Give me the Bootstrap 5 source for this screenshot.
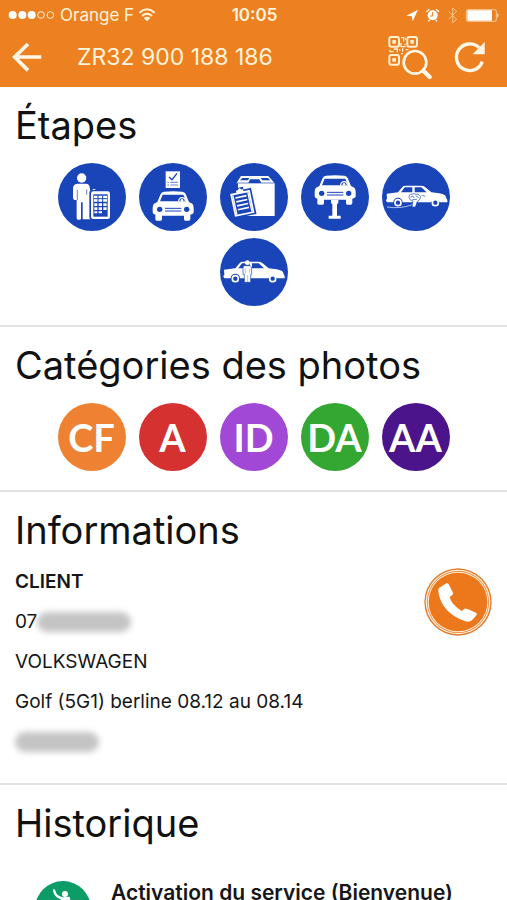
<!DOCTYPE html>
<html lang="fr">
<head>
<meta charset="utf-8">
<meta name="viewport" content="width=device-width, initial-scale=1">
<title>ZR32 900 188 186</title>
<link href="https://cdn.jsdelivr.net/npm/bootstrap@5.3.0/dist/css/bootstrap.min.css" rel="stylesheet">
<style>
  body { font-family: Inter, "Liberation Sans", sans-serif; font-size: 19px; line-height: 24px; color: #161616; background: #fff; }
  svg { display: block; }
  .app-header { background: #ed8121; color: #fff3da; }
  .status-bar { height: 30px; font-size: 17px; padding: 0 6px 0 8px; }
  .status-side { flex: 1 1 0; }
  .clock { font-weight: 600; }
  .title-bar { height: 57px; padding: 0 20px 4px 12px; }
  .title-bar .app-title { font-size: 23px; line-height: 28px; font-weight: 400; margin-left: 35px; }
  .title-bar .btn { color: #fff7e6; line-height: 0; }
  .scan-btn { margin-right: 20px; }
  .panel { padding: 13px 15px 19px; border-bottom: 2px solid #e2e2e2; }
  .panel h2 { font-size: 38px; line-height: 50px; font-weight: 400; margin: 0 0 13px; color: #111; }
  .bubbles { column-gap: 13px; row-gap: 7px; }
  .bubble { width: 68px; height: 68px; border-radius: 50%; border: 0; padding: 0; color: #fff; flex: none; overflow: hidden; }
  .step { background: #1945b8; }
  .cat { font-family: Lato, "Liberation Sans", sans-serif; font-weight: 700; font-size: 38px; line-height: 68px; text-align: center; }
  .cat-cf { background: #ee8232; }
  .cat-a { background: #d63131; }
  .cat-id { background: #a149d6; }
  .cat-da { background: #33a732; }
  .cat-aa { background: #4b148a; }
  .details { padding-bottom: 29px; }
  .details .client-lines { padding-top: 2px; }
  .details p { margin-bottom: 16px; }
  .hidden-value { height: 20px; border-radius: 10px; background: #c4c4c4; filter: blur(3px); }
  .hidden-phone { width: 94px; }
  .hidden-plate { width: 84px; }
  .event-icon { width: 56px; height: 56px; }
  .event { padding: 20px 20px 0; gap: 20px; }
  .event-title { font-size: 21px; font-weight: 600; }
</style>
<script src="https://cdn.jsdelivr.net/npm/bootstrap@5.3.0/dist/js/bootstrap.bundle.min.js"></script>
</head>
<body>
<svg width="0" height="0" class="position-absolute" aria-hidden="true">
  <defs>
    <g id="car-front">
      <path d="M332 119Q335 113 342 112Q369 109 397 112Q404 113 407 119L417 143L427 148Q431 152 431 161V174Q431 179 421 181V194Q421 199 416 199H406Q402 199 402 194V184H336V194Q336 199 332 199H320Q316 199 316 194V181Q308 179 308 174V161Q308 152 312 148L322 143Z" fill="#fff"/>
      <path d="M338 121H400L408 141H330Z" fill="#1945b8"/>
      <path d="M386 141a10 11 0 0 1 20 0" fill="none" stroke="#fff" stroke-width="4"/>
      <circle cx="396" cy="138" r="4" fill="#fff"/>
      <circle cx="329" cy="165" r="8" fill="#1945b8"/><circle cx="410" cy="165" r="8" fill="#1945b8"/>
      <path d="M345 162H394M345 170H394" stroke="#1945b8" stroke-width="3"/>
    </g>
    <g id="car-side">
      <path d="M34 117L68 113L82 96Q85 93 90 93H137Q144 93 149 97L168 113Q195 115 208 121Q212 124 213 131L216 136V143H193A14 14 0 0 0 167 143H82A14 14 0 0 0 54 143H36Q32 140 32 136L35 132Z" fill="#fff"/>
      <path d="M77 113L88 98H111V113ZM118 98H138L154 113H118Z" fill="#1945b8"/>
      <circle cx="68" cy="144" r="9" fill="none" stroke="#fff" stroke-width="5"/>
      <circle cx="180" cy="144" r="9" fill="none" stroke="#fff" stroke-width="5"/>
    </g>
  </defs>
</svg>

<div class="d-flex flex-column vh-100 overflow-hidden">
  <header class="app-header flex-shrink-0">
    <div class="status-bar d-flex align-items-center">
      <div class="status-side d-flex align-items-center gap-1">
        <svg width="48" height="14" viewBox="27 23 144 42" aria-hidden="true">
          <g fill="#fff"><circle cx="41" cy="44" r="12"/><circle cx="70" cy="44" r="12"/><circle cx="98" cy="44" r="12"/></g>
          <g fill="none" stroke="#fff0d0" stroke-width="3"><circle cx="126" cy="44" r="10"/><circle cx="154" cy="44" r="10"/></g>
        </svg>
        <span>Orange F</span>
        <svg width="18" height="14" viewBox="410 22 54 42" aria-hidden="true">
          <g fill="none" stroke="#fff3da" stroke-width="6"><path d="M414 36Q437 16 460 36M422 46Q437 33 452 46"/></g>
          <path d="M427 52Q437 44 447 52L437 62Z" fill="#fff3da"/>
        </svg>
      </div>
      <div class="clock">10:05</div>
      <div class="status-side d-flex justify-content-end">
        <svg width="96" height="18" viewBox="466 16 288 54" aria-label="Localisation, alarme, Bluetooth, batterie" role="img">
          <path d="M470 45L505 27L489 62L486 46Z" fill="#fff"/>
          <circle cx="549" cy="44" r="15" fill="#fff"/><path d="M530 33L539 26M568 33L559 26M540 57L536 62M558 57L562 62" stroke="#fff" stroke-width="4"/>
          <path d="M549 34V46H541" fill="none" stroke="#ed8121" stroke-width="3"/>
          <path d="M597 33L621 56L609 66V22L621 32L597 55" fill="none" stroke="#f8c68b" stroke-width="3"/>
          <rect x="650" y="27" width="90" height="35" rx="5" fill="none" stroke="#fff3da" stroke-width="2"/>
          <rect x="653" y="29" width="74" height="31" rx="2" fill="#fff"/><path d="M743 38Q750 44 743 51Z" fill="#fff3da"/>
        </svg>
      </div>
    </div>
    <div class="title-bar d-flex align-items-center">
      <button type="button" class="btn border-0 p-0" aria-label="Retour">
        <svg width="30" height="30" viewBox="34 127 90 90"><path d="M122 172H43M82 133L42 172L82 212" fill="none" stroke="currentColor" stroke-width="11"/></svg>
      </button>
      <h1 class="app-title mb-0 flex-grow-1">ZR32 900 188 186</h1>
      <button type="button" class="btn border-0 p-0 scan-btn" aria-label="Rechercher un code QR">
        <svg width="46" height="46" viewBox="414 101 138 138">
          <g fill="none" stroke="#fff0cf" stroke-width="6">
            <rect x="421" y="110" width="29" height="29" rx="6"/><rect x="475" y="110" width="29" height="29" rx="6"/><rect x="421" y="164" width="29" height="29" rx="6"/>
            <path d="M456 112H464V124M470 112V119M456 128V139H470M468 130V135M423 148V154H434M434 146H445V156M452 146V152M461 144V154M470 148H478M456 160H462" stroke-width="4"/>
          </g>
          <g fill="#fff0cf"><rect x="430" y="119" width="11" height="11" rx="2"/><rect x="484" y="119" width="11" height="11" rx="2"/><rect x="430" y="173" width="11" height="11" rx="2"/></g>
          <circle cx="498" cy="186" r="41" fill="#ed8121"/>
          <circle cx="498" cy="186" r="34" fill="none" stroke="#fff7e6" stroke-width="8"/>
          <path d="M523 211L542 230" stroke="#fff7e6" stroke-width="13" stroke-linecap="round"/>
        </svg>
      </button>
      <button type="button" class="btn border-0 p-0" aria-label="Actualiser">
        <svg width="34" height="34" viewBox="612 121 102 102"><path d="M700 186A40 40 0 1 1 690 144" fill="none" stroke="currentColor" stroke-width="10"/><path d="M707 127V164H671Z" fill="currentColor"/></svg>
      </button>
    </div>
  </header>

  <main class="flex-grow-1 overflow-hidden">
    <section class="panel">
      <h2>Étapes</h2>
      <div class="bubbles d-flex flex-wrap justify-content-center px-4">
        <button type="button" class="bubble step" aria-label="Réception du client">
          <svg viewBox="24 25 204 204">
            <g fill="#fff"><circle cx="95" cy="70" r="14"/>
            <path d="M82 87H108Q118 87 119 98L121 110L132 102L138 106L127 116V194H98V143H93V192Q93 195 88 195H84Q80 195 80 191V136H73Q69 134 69 128V101Q70 88 82 87Z"/></g>
            <path d="M82 105V136M110 104V120" stroke="#1945b8" stroke-width="2"/>
            <rect x="118" y="106" width="66" height="90" rx="9" fill="#1945b8"/>
            <rect x="123" y="110" width="57" height="83" rx="7" fill="#fff"/>
            <rect x="130" y="119" width="43" height="67" fill="#1945b8"/>
            <path d="M132 123H171V141H132ZM133 146H142V154H133ZM146 146H156V154H146ZM160 146H170V154H160ZM133 158H142V166H133ZM146 158H156V166H146ZM160 158H170V166H160ZM133 170H142V176H133ZM146 170H156V176H146Z" fill="#fff"/>
            <path d="M132 132H171M144 122V142M158 122V142" stroke="#1945b8" stroke-width="3"/>
          </svg>
        </button>
        <button type="button" class="bubble step" aria-label="Contrôle du véhicule">
          <svg viewBox="267 26 204 204"><use href="#car-front"/>
            <rect x="347" y="51" width="43" height="50" fill="#fff"/>
            <path d="M357 68L366 76L381 57" fill="none" stroke="#1945b8" stroke-width="4"/>
            <path d="M352 84H357M361 84H384M352 92H357M361 92H384" stroke="#1945b8" stroke-width="2"/>
          </svg>
        </button>
        <button type="button" class="bubble step" aria-label="Commande des pièces">
          <svg viewBox="24 26 204 204">
            <path d="M87 65H169L188 87V185H78V87H73Z" fill="#fff"/>
            <path d="M84 78L91 71H112L108 78ZM146 71H168L175 78H151ZM114 75H142L148 86H109Z" fill="#1945b8"/>
            <path d="M73 86H188" stroke="#1945b8" stroke-width="2"/>
            <g transform="translate(91 147) rotate(-12)">
              <path d="M-35-40H-12V-48H12V-40H35V40H-35Z" fill="#1945b8"/>
              <path d="M-30-35H-11V-41H-5Q0-52 5-41H11V-35H30V35H-30Z" fill="#fff"/>
              <path d="M-25-29H25V30H-25Z" fill="#1945b8"/>
              <path d="M-25-29H-21V30H-25ZM21-29H25V30H21Z" fill="#fff"/>
              <path d="M-17-20H17M-17-8H17M-17 4H17M-17 16H17" stroke="#fff" stroke-width="5"/>
            </g>
          </svg>
        </button>
        <button type="button" class="bubble step" aria-label="Véhicule sur le pont">
          <svg viewBox="267 26 204 204"><use href="#car-front" y="-48"/>
            <path d="M357 136H379V146L375 150V184H386V193H350V184H361V150L357 146Z" fill="#fff"/>
          </svg>
        </button>
        <button type="button" class="bubble step" aria-label="Nettoyage du véhicule">
          <svg viewBox="20 25 204 204"><use href="#car-side"/>
            <path d="M35 157Q75 163 108 151Q116 149 117 140" fill="none" stroke="#fff" stroke-width="2"/>
            <path d="M101 128Q101 117 110 119Q116 114 121 119Q129 116 132 122Q139 124 134 132Q132 139 126 140L120 157H110L113 139Q103 138 101 128Z" fill="#fff" stroke="#1945b8" stroke-width="2"/>
            <path d="M106 127Q114 120 117 130M121 123L130 129M111 135L125 134M139 122L150 125" fill="none" stroke="#1945b8" stroke-width="2"/>
          </svg>
        </button>
        <button type="button" class="bubble step" aria-label="Restitution du véhicule">
          <svg viewBox="24 18 204 204"><use href="#car-side" x="2" y="-4"/>
            <path d="M97 101H114Q119 103 119 110V127H116V151H97V127H93V109Q93 102 97 101Z" fill="#fff" stroke="#1945b8" stroke-width="2"/>
            <circle cx="106" cy="92" r="7" fill="#fff"/><path d="M107 129V150M100 109V125M113 109V122" stroke="#1945b8" stroke-width="1"/>
          </svg>
        </button>
      </div>
    </section>

    <section class="panel">
      <h2>Catégories des photos</h2>
      <div class="bubbles d-flex flex-wrap justify-content-center">
        <button type="button" class="bubble cat cat-cf">CF</button>
        <button type="button" class="bubble cat cat-a">A</button>
        <button type="button" class="bubble cat cat-id">ID</button>
        <button type="button" class="bubble cat cat-da">DA</button>
        <button type="button" class="bubble cat cat-aa">AA</button>
      </div>
    </section>

    <section class="panel details">
      <h2>Informations</h2>
      <div class="d-flex justify-content-between align-items-start">
        <div class="client-lines">
          <p class="fw-semibold">CLIENT</p>
          <p class="d-flex align-items-center"><span>07</span><span class="hidden-value hidden-phone"></span></p>
          <p>VOLKSWAGEN</p>
          <p>Golf (5G1) berline 08.12 au 08.14</p>
          <p class="d-flex align-items-center mb-0"><span class="hidden-value hidden-plate"></span>&nbsp;</p>
        </div>
        <button type="button" class="bubble" aria-label="Appeler le client">
          <svg viewBox="32 19 204 204">
            <circle cx="134" cy="121" r="101" fill="#e5792b"/><circle cx="134" cy="121" r="97" fill="#fff1d8"/><circle cx="134" cy="121" r="93" fill="#e5792b"/><circle cx="134" cy="121" r="91" fill="#fff1d8"/><circle cx="134" cy="121" r="88" fill="#ed781b"/>
            <path d="M77 79L99 65Q104 64 107 69L119 93Q120 98 116 101L109 106Q114 128 145 148L154 141Q158 139 163 142L188 153Q192 156 190 160L176 176Q168 182 156 179Q85 154 75 90Q74 82 77 79Z" fill="#fff"/>
          </svg>
        </button>
      </div>
    </section>

    <section class="panel">
      <h2>Historique</h2>
      <div class="event d-flex align-items-start">
        <svg class="event-icon flex-shrink-0" viewBox="101 333 168 168" aria-hidden="true">
          <circle cx="185" cy="417" r="84" fill="#0b9c68"/>
          <circle cx="191" cy="372" r="9" fill="#fff"/>
          <path d="M158 361Q162 382 184 385L202 384Q207 401 200 440" fill="none" stroke="#fff" stroke-width="7" stroke-linecap="round"/>
          <path d="M178 383L205 385L202 430H180Z" fill="#fff"/>
        </svg>
        <div class="event-title">Activation du service (Bienvenue)</div>
      </div>
    </section>
  </main>
</div>
</body>
</html>
